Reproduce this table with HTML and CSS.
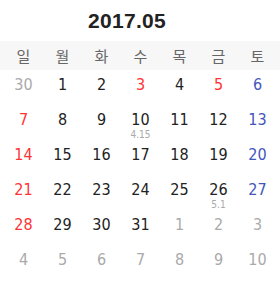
FILE: index.html
```html
<!DOCTYPE html>
<html lang="ko">
<head>
<meta charset="utf-8">
<link rel="stylesheet" href="styles.css">
</head>
<body>
<div class="cal">
  <div class="title">2017.05</div>
  <div class="week">
    <div class="wd">일</div><div class="wd">월</div><div class="wd">화</div><div class="wd">수</div><div class="wd">목</div><div class="wd">금</div><div class="wd">토</div>
  </div>
  <div class="days">
    <div class="d other"><span class="n">30</span></div>
    <div class="d"><span class="n">1</span></div>
    <div class="d"><span class="n">2</span></div>
    <div class="d hol"><span class="n">3</span></div>
    <div class="d"><span class="n">4</span></div>
    <div class="d hol"><span class="n">5</span></div>
    <div class="d sat"><span class="n">6</span></div>

    <div class="d sun"><span class="n">7</span></div>
    <div class="d"><span class="n">8</span></div>
    <div class="d"><span class="n">9</span></div>
    <div class="d"><span class="n">10</span><span class="lunar">4.15</span></div>
    <div class="d"><span class="n">11</span></div>
    <div class="d"><span class="n">12</span></div>
    <div class="d sat"><span class="n">13</span></div>

    <div class="d sun"><span class="n">14</span></div>
    <div class="d"><span class="n">15</span></div>
    <div class="d"><span class="n">16</span></div>
    <div class="d"><span class="n">17</span></div>
    <div class="d"><span class="n">18</span></div>
    <div class="d"><span class="n">19</span></div>
    <div class="d sat"><span class="n">20</span></div>

    <div class="d sun"><span class="n">21</span></div>
    <div class="d"><span class="n">22</span></div>
    <div class="d"><span class="n">23</span></div>
    <div class="d"><span class="n">24</span></div>
    <div class="d"><span class="n">25</span></div>
    <div class="d"><span class="n">26</span><span class="lunar">5.1</span></div>
    <div class="d sat"><span class="n">27</span></div>

    <div class="d sun"><span class="n">28</span></div>
    <div class="d"><span class="n">29</span></div>
    <div class="d"><span class="n">30</span></div>
    <div class="d"><span class="n">31</span></div>
    <div class="d other"><span class="n">1</span></div>
    <div class="d other"><span class="n">2</span></div>
    <div class="d other"><span class="n">3</span></div>

    <div class="d other"><span class="n">4</span></div>
    <div class="d other"><span class="n">5</span></div>
    <div class="d other"><span class="n">6</span></div>
    <div class="d other"><span class="n">7</span></div>
    <div class="d other"><span class="n">8</span></div>
    <div class="d other"><span class="n">9</span></div>
    <div class="d other"><span class="n">10</span></div>
  </div>
</div>
</body>
</html>
```
FILE: styles.css
```css
html, body {
  margin: 0;
  padding: 0;
  background: #fff;
}
.cal {
  width: 280px;
  font-family: "DejaVu Sans Condensed", "DejaVu Sans", Tahoma, sans-serif;
}
.title {
  height: 41px;
  box-sizing: border-box;
  padding: 8px 26px 0 0;
  text-align: center;
  font-family: "Liberation Sans", Arial, sans-serif;
  font-weight: bold;
  font-size: 21px;
  line-height: 25px;
  color: #222;
  letter-spacing: 0.3px;
}
.week {
  display: grid;
  grid-template-columns: repeat(7, 39px);
  padding: 0 3px 0 4px;
  height: 29px;
  background: #f7f7f7;
  align-items: center;
}
.wd {
  text-align: center;
  font-family: "Noto Sans CJK KR", sans-serif;
  font-size: 15px;
  line-height: 20px;
  color: #666;
}
.days {
  display: grid;
  grid-template-columns: repeat(7, 39px);
  grid-auto-rows: 35px;
  padding: 0 3px 0 4px;
}
.d {
  display: flex;
  flex-direction: column;
  align-items: center;
  padding-top: 5px;
  color: #222;
}
.n {
  font-size: 16px;
  line-height: 20px;
}
.lunar {
  font-size: 10px;
  line-height: 10px;
  color: #aaa;
}
.other { color: #aaa; }
.hol, .sun { color: #f33; }
.sat { color: #4455bb; }
```
